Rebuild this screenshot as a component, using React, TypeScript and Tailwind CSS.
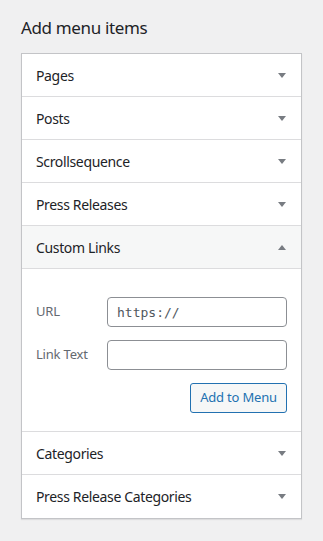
const sections = [
  { name: 'Pages' },
  { name: 'Posts' },
  { name: 'Scrollsequence' },
  { name: 'Press Releases' },
  { name: 'Custom Links', open: true },
  { name: 'Categories' },
  { name: 'Press Release Categories' },
]

function Arrow({ up }: { up?: boolean }) {
  return (
    <svg width="8" height="5" viewBox="0 0 8 5" className="block">
      <path d={up ? 'M0 5 L4 0 L8 5 Z' : 'M0 0 L8 0 L4 5 Z'} fill="#787c82" />
    </svg>
  )
}

function CustomLinks() {
  return (
    <div className="border-b border-[#dcdcde] bg-white h-[163px] pt-[28px] pl-[14px] pr-[14px]">
      <div className="flex items-center h-[30px]">
        <label className="w-[71px] text-[13px] text-[#646970] tracking-[-0.2px]">URL</label>
        <input
          defaultValue="https://"
          className="w-[180px] h-[30px] border border-[#8c8f94] rounded-[4px] pl-[9px] text-[13px] text-[#50575e] outline-none"
          style={{ fontFamily: '"DejaVu Sans Mono", monospace' }}
        />
      </div>
      <div className="flex items-center h-[30px] mt-[13px]">
        <label className="w-[71px] text-[13px] text-[#646970] tracking-[-0.2px]">Link Text</label>
        <input className="w-[180px] h-[30px] border border-[#8c8f94] rounded-[4px] px-2 text-[14px] outline-none" />
      </div>
      <div className="flex justify-end mt-[13px]">
        <button className="w-[97px] h-[30px] border border-[#2271b1] rounded-[3px] bg-[#f6f7f7] text-[13px] text-[#2271b1] tracking-[-0.2px]">
          Add to Menu
        </button>
      </div>
    </div>
  )
}

export default function App() {
  return (
    <div className="min-h-screen bg-[#f0f0f1] px-[21px] pt-[16px]" style={{ fontFamily: '"Noto Sans", sans-serif' }}>
      <h2 className="text-[17px] leading-[24px] text-[#1d2327] h-[37px] tracking-[-0.35px]">Add menu items</h2>

      <div className="w-[281px] border border-[#c3c4c7] bg-white shadow-[0_1px_1px_rgba(0,0,0,0.08)]">
        {sections.map((s, i) => (
          <div key={s.name}>
            <div
              className={
                'flex items-center justify-between h-[43px] pl-[14px] pr-[15px] ' +
                (i < sections.length - 1 ? 'border-b border-[#dcdcde] ' : '') +
                (s.open ? 'bg-[#f6f7f7]' : 'bg-white')
              }
            >
              <span className="text-[14px] text-[#1d2327] tracking-[-0.35px]">{s.name}</span>
              <Arrow up={s.open} />
            </div>
            {s.open && <CustomLinks />}
          </div>
        ))}
      </div>
    </div>
  )
}
